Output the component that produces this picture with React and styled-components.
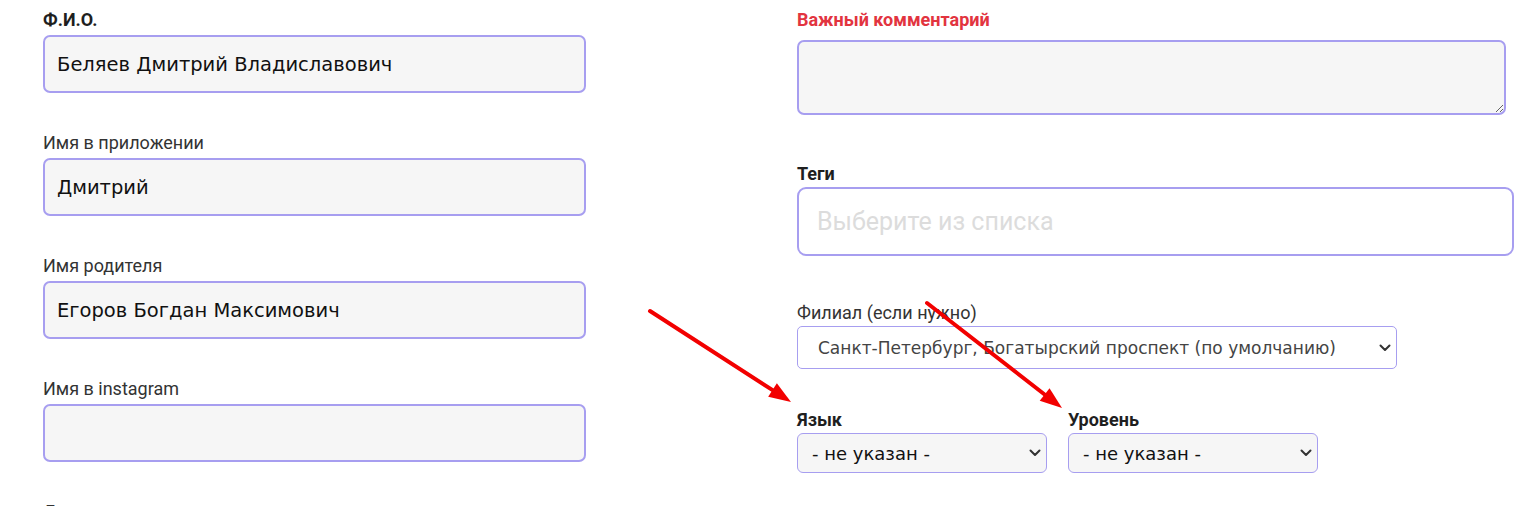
import React from "react";
import styled, { createGlobalStyle } from "styled-components";

const Global = createGlobalStyle`
  html, body { margin: 0; padding: 0; background: #fff; }
  body { font-family: Roboto, "Noto Sans", sans-serif; overflow: hidden; }
`;

const Page = styled.div`
  position: relative;
  width: 1531px;
  height: 506px;
  overflow: hidden;
  display: grid;
  grid-template-columns: 543px 717px;
  column-gap: 211px;
  padding-left: 43px;
  box-sizing: border-box;
`;

const Column = styled.div`
  display: flex;
  flex-direction: column;
  padding-top: 10px;
`;

const Field = styled.div`
  display: flex;
  flex-direction: column;
  flex: none;
  margin-bottom: ${(p) => p.$mb || 0}px;
`;

const Label = styled.label`
  display: block;
  font-family: Roboto, "Noto Sans", sans-serif;
  font-size: 18px;
  line-height: 20px;
  height: 20px;
  font-weight: ${(p) => (p.$bold ? 700 : 400)};
  color: ${(p) => (p.$danger ? "#e2343f" : p.$bold ? "#1f1f1f" : "#333")};
  margin-bottom: ${(p) => p.$gap || 5}px;
  white-space: nowrap;
`;

const TextInput = styled.input`
  display: block;
  box-sizing: border-box;
  width: 100%;
  height: 58px;
  margin: 0;
  border: 2px solid #a79ef0;
  border-radius: 7px;
  background: #f6f6f6;
  padding: 0 12px;
  font-family: "DejaVu Sans", Verdana, sans-serif;
  font-size: 19.5px;
  color: #111;
  outline: none;
`;

const TextArea = styled.textarea`
  display: block;
  box-sizing: border-box;
  width: 709px;
  height: 75px;
  margin: 0;
  border: 2px solid #a79ef0;
  border-radius: 7px;
  background: #f6f6f6;
  padding: 10px 14px;
  font-family: "DejaVu Sans", Verdana, sans-serif;
  font-size: 16px;
  outline: none;
`;

const TagBox = styled.div`
  box-sizing: border-box;
  width: 717px;
  height: 69px;
  border: 2px solid #a79ef0;
  border-radius: 9px;
  background: #fff;
  display: flex;
  align-items: center;
  padding: 0 18px;
  font-family: Roboto, "Noto Sans", sans-serif;
  font-size: 25px;
  color: #dcdcdc;
`;

const SelectWrap = styled.div`
  position: relative;
  width: ${(p) => p.$w}px;
`;

const Select = styled.select`
  display: block;
  appearance: none;
  -webkit-appearance: none;
  box-sizing: border-box;
  width: 100%;
  height: ${(p) => p.$h}px;
  margin: 0;
  border: 1px solid #a79ef0;
  border-radius: ${(p) => p.$r || 6}px;
  background: ${(p) => p.$bg || "#fff"};
  padding: 0 30px 0 ${(p) => p.$pl || 14}px;
  font-family: "DejaVu Sans", Verdana, sans-serif;
  font-size: ${(p) => p.$fs || 17}px;
  color: ${(p) => p.$color || "#111"};
  outline: none;
`;

const Chevron = styled.svg`
  position: absolute;
  right: ${(p) => p.$right || 7}px;
  top: 50%;
  transform: translateY(-50%);
  pointer-events: none;
`;

const Row = styled.div`
  display: flex;
  gap: 21px;
`;

const Overlay = styled.svg`
  position: absolute;
  left: 0;
  top: 0;
  pointer-events: none;
`;

const ChevronIcon = ({ right }) => (
  <Chevron $right={right} width="12" height="8" viewBox="0 0 12 8">
    <path d="M1.5 1.5 L6 6 L10.5 1.5" fill="none" stroke="#333" strokeWidth="2" strokeLinecap="round" strokeLinejoin="round" />
  </Chevron>
);

const Arrow = ({ x1, y1, x2, y2 }) => {
  const dx = x2 - x1;
  const dy = y2 - y1;
  const len = Math.hypot(dx, dy);
  const ux = dx / len;
  const uy = dy / len;
  const hl = 22;
  const hw = 8;
  const bx = x2 - ux * hl;
  const by = y2 - uy * hl;
  const px = -uy * hw;
  const py = ux * hw;
  return (
    <g>
      <line x1={x1} y1={y1} x2={bx + ux * 2} y2={by + uy * 2} stroke="#f20000" strokeWidth="4" strokeLinecap="round" />
      <polygon points={`${x2},${y2} ${bx + px},${by + py} ${bx - px},${by - py}`} fill="#f20000" />
    </g>
  );
};

export default function App() {
  return (
    <>
      <Global />
      <Page>
        <Column>
          <Field $mb={40}>
            <Label $bold>Ф.И.О.</Label>
            <TextInput defaultValue="Беляев Дмитрий Владиславович" />
          </Field>
          <Field $mb={40}>
            <Label>Имя в приложении</Label>
            <TextInput defaultValue="Дмитрий" />
          </Field>
          <Field $mb={40}>
            <Label>Имя родителя</Label>
            <TextInput defaultValue="Егоров Богдан Максимович" />
          </Field>
          <Field $mb={40}>
            <Label>Имя в instagram</Label>
            <TextInput defaultValue="" />
          </Field>
          <Field>
            <Label>Дата рождения</Label>
          </Field>
        </Column>

        <Column>
          <Field $mb={49}>
            <Label $bold $danger $gap={10}>Важный комментарий</Label>
            <TextArea />
          </Field>
          <Field $mb={47}>
            <Label $bold $gap={3}>Теги</Label>
            <TagBox>Выберите из списка</TagBox>
          </Field>
          <Field $mb={41}>
            <Label $gap={3}>Филиал (если нужно)</Label>
            <SelectWrap $w={600}>
              <Select $h={43} $r={5} $pl={20} $color="#444" defaultValue="spb">
                <option value="spb">Санкт-Петербург, Богатырский проспект (по умолчанию)</option>
              </Select>
              <ChevronIcon right={6} />
            </SelectWrap>
          </Field>
          <Row>
            <Field>
              <Label $bold $gap={3}>Язык</Label>
              <SelectWrap $w={250}>
                <Select $h={40} $bg="#f6f6f6" $pl={14} $fs={18}>
                  <option>- не указан -</option>
                </Select>
                <ChevronIcon right={6} />
              </SelectWrap>
            </Field>
            <Field>
              <Label $bold $gap={3}>Уровень</Label>
              <SelectWrap $w={250}>
                <Select $h={40} $bg="#f6f6f6" $pl={14} $fs={18}>
                  <option>- не указан -</option>
                </Select>
                <ChevronIcon right={6} />
              </SelectWrap>
            </Field>
          </Row>
        </Column>

        <Overlay width="1531" height="506" viewBox="0 0 1531 506">
          <Arrow x1={650} y1={311} x2={791} y2={402} />
          <Arrow x1={927} y1={303} x2={1062} y2={408} />
        </Overlay>
      </Page>
    </>
  );
}
